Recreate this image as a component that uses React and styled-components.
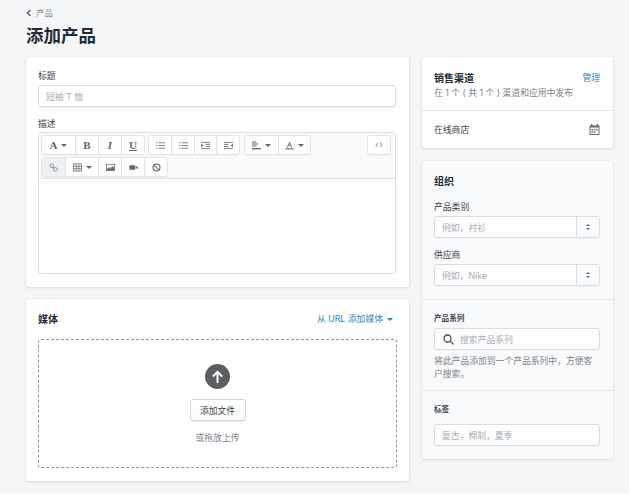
import React from "react";
import styled, { createGlobalStyle } from "styled-components";

const Global = createGlobalStyle`
  html, body { margin: 0; padding: 0; background: #fff; }
  body { font-family: "Inter", "Noto Sans CJK SC", "Noto Sans", sans-serif; color: #212b36; }
  * { box-sizing: border-box; }
`;
const Page = styled.div`
  width: 629px; height: 493px; overflow: hidden; background: #f4f6f8;
  padding: 7px 16px 0 26px;
`;
const Crumb = styled.div`
  display: flex; align-items: center; gap: 4px; height: 12px;
  font-size: 8.5px; color: #7b8792; line-height: 12px;
`;
const Title = styled.h1`
  margin: 5px 0 9px; font-size: 17.5px; line-height: 24px; height: 24px; font-weight: 700; color: #212b36;
`;
const Columns = styled.div`
  display: grid; grid-template-columns: 383px 191px; column-gap: 13px; align-items: start;
`;
const Stack = styled.div`
  display: flex; flex-direction: column; gap: ${p => p.$gap}px;
`;
const Card = styled.section`
  background: ${p => p.$muted ? "#f9fafb" : "#fff"}; border-radius: 3px;
  box-shadow: 0 0 0 1px rgba(63,63,68,.03), 0 1px 3px 0 rgba(63,63,68,.12);
  height: ${p => p.$h}px;
`;
const Section = styled.div`
  padding: ${p => p.$pad || "0 12px"};
  height: ${p => p.$h ? p.$h + "px" : "auto"};
  border-top: ${p => p.$line ? "1px solid #e6e9ec" : "none"};
`;
const Label = styled.div`
  font-size: ${p => p.$bold ? 7.6 : 8.8}px; line-height: 12px; height: 12px; color: #37424d;
  margin-bottom: ${p => p.$mb ?? 3}px; margin-top: ${p => p.$mt ?? 0}px;
  font-weight: ${p => p.$bold ? 600 : 400};
`;
const Input = styled.div`
  height: 22px; border: 1px solid #d8dde2; border-radius: 3px; background: #fff;
  box-shadow: 0 1px 1px rgba(22,29,37,.04);
  display: flex; align-items: center; padding: 0 7px;
  font-size: 8.8px; color: #a3adb6; white-space: nowrap;
`;
const Editor = styled.div`
  height: 142px; border: 1px solid #dadfe4; border-radius: 3px; background: #fff;
  display: flex; flex-direction: column;
`;
const Toolbar = styled.div`
  height: 46px; background: #f9fafb; border-bottom: 1px solid #dadfe4;
  padding: 2px 2px 0 2px; display: flex; flex-direction: column; gap: 2px;
`;
const ToolRow = styled.div`
  display: flex; gap: 3px; height: 20px;
`;
const Group = styled.div`
  display: flex; margin-left: ${p => p.$push ? "auto" : `${p.$ml || 0}px`}; margin-right: ${p => p.$push ? "2px" : "0"};
  border: 1px solid #e1e5e9; border-radius: 3px; background: #fff;
  box-shadow: 0 1px 1px rgba(22,29,37,.03);
`;
const Tool = styled.div`
  width: ${p => p.$w}px; display: flex; align-items: center; justify-content: center; gap: 4px;
  border-left: ${p => p.$first ? "none" : "1px solid #e1e5e9"};
  background: ${p => p.$on ? "#eef0f3" : "transparent"};
  color: #5c6873;
  font: ${p => p.$italic ? "italic " : ""}700 11px "Liberation Serif", serif;
  text-decoration: ${p => p.$under ? "underline" : "none"};
`;
const Caret = styled.span`
  display: inline-block; width: 0; height: 0;
  border-left: 3px solid transparent; border-right: 3px solid transparent;
  border-top: 3px solid ${p => p.$c || "#5c6873"};
`;
const Head = styled.div`
  display: flex; justify-content: space-between; align-items: center;
`;
const CardTitle = styled.div`
  font-size: 10px; line-height: 16px; font-weight: 600; color: #212b36;
  margin-bottom: ${p => p.$mb || 0}px;
`;
const LinkText = styled.div`
  display: flex; align-items: center; gap: 4px; font-size: 8.8px; line-height: 12px; color: #2f7fc1;
  margin-right: ${p => p.$mr || 0}px;
`;
const Sub = styled.div`
  font-size: 8.8px; line-height: 13px; color: #7a838c; margin-top: ${p => p.$mt || 0}px;
`;
const Row = styled.div`
  display: flex; justify-content: space-between; align-items: center; height: 100%;
  font-size: 8.8px; color: #37424d;
`;
const Drop = styled.div`
  height: 129px; border: 1px dashed #8f9396; border-radius: 3px; margin-top: 12px;
  display: flex; flex-direction: column; align-items: center; padding-top: 24px;
`;
const Circle = styled.div`
  width: 25px; height: 25px; border-radius: 50%; background: #5b5e61;
  display: flex; align-items: center; justify-content: center;
`;
const Button = styled.div`
  width: 56px; height: 22px; margin-top: 10px; border: 1px solid #d0d5da; border-radius: 3px;
  background: linear-gradient(#fff, #f9fafb); box-shadow: 0 1px 0 rgba(22,29,37,.05);
  display: flex; align-items: center; justify-content: center; font-size: 8.8px; color: #37424d;
`;
const Hint = styled.div`
  margin-top: 11px; font-size: 8.8px; line-height: 12px; color: #7a838c;
`;
const Combo = styled(Input)`
  padding: 0 0 0 7px; justify-content: space-between; margin-bottom: ${p => p.$mb || 0}px;
`;
const Stepper = styled.div`
  width: 23px; height: 20px; background: #f9fafb; border-left: 1px solid #dadfe4;
  border-radius: 0 3px 3px 0; display: flex; flex-direction: column; gap: 2px;
  align-items: center; justify-content: center;
`;
const Up = styled.span`
  width: 0; height: 0; border-left: 2px solid transparent; border-right: 2px solid transparent;
  border-bottom: 2.5px solid #5c6873;
`;
const Down = styled(Up)`
  border-bottom: none; border-top: 2.5px solid #5c6873;
`;
const Search = styled(Input)`
  gap: 6px; padding: 0 8px; color: #a3adb6;
`;

const G = ({ children }) => <svg width="9" height="9" viewBox="0 0 10 10" fill="#6b7681">{children}</svg>;
const Bullet = () => <G><rect x="0" y="1.5" width="1.5" height="1"/><rect x="0" y="4.5" width="1.5" height="1"/><rect x="0" y="7.5" width="1.5" height="1"/><rect x="3" y="1.5" width="7" height="1"/><rect x="3" y="4.5" width="7" height="1"/><rect x="3" y="7.5" width="7" height="1"/></G>;
const Indent = ({ flip }) => <G><rect x="0" y="1" width="10" height="1"/><rect x="0" y="8" width="10" height="1"/><rect x={flip ? 0 : 5} y="3.2" width="5" height="1"/><rect x={flip ? 0 : 5} y="5.7" width="5" height="1"/><path d={flip ? "M10 3v4L7 5z" : "M0 3v4l3-2z"}/></G>;
const Align = () => <G><rect x="0" y="0.5" width="5" height="1.2"/><rect x="0" y="2.7" width="7" height="1.2"/><rect x="0" y="4.9" width="5" height="1.2"/><rect x="0" y="7.8" width="10" height="1.6"/></G>;
const Color = () => <G><path d="M5 0.5 8 7H6.7L6 5.3H4L3.3 7H2zM4.4 4.3h1.2L5 2.7z"/><rect x="0.5" y="8" width="9" height="1.4"/></G>;
const Code = () => <svg width="8" height="6" viewBox="0 0 10 7" fill="none" stroke="#77828c" strokeWidth="1.1"><path d="M3.5 1 1 3.5 3.5 6M6.5 1 9 3.5 6.5 6"/></svg>;
const LinkIcon = () => <svg width="9" height="9" viewBox="0 0 10 10" fill="none" stroke="#8a949d" strokeWidth="1.1"><circle cx="3" cy="3" r="2"/><circle cx="7" cy="7" r="2"/><path d="M4 4l2 2"/></svg>;
const TableIcon = () => <svg width="9" height="9" viewBox="0 0 10 10" fill="none" stroke="#6b7681" strokeWidth="0.9"><rect x="0.5" y="1" width="9" height="8"/><path d="M0.5 3.7h9M0.5 6.3h9M3.5 1v8M6.5 1v8"/></svg>;
const ImageIcon = () => <svg width="9" height="9" viewBox="0 0 10 10" fill="#6b7681"><path d="M0 1h10v8H0zm1 1v5l2.5-2.5L5 6l2-3 2 2.5V2z" fillRule="evenodd"/></svg>;
const VideoIcon = () => <svg width="9" height="9" viewBox="0 0 10 10" fill="#5c6873"><rect x="0.5" y="2.5" width="6.5" height="5" rx="0.6"/><path d="M7 5l2.7-2v4z"/></svg>;
const BlockIcon = () => <svg width="9" height="9" viewBox="0 0 10 10" fill="none" stroke="#5c6873" strokeWidth="1.2"><circle cx="5" cy="5" r="3.9"/><path d="M2.3 2.3l5.4 5.4"/></svg>;
const Calendar = () => <svg width="11" height="11" viewBox="0 0 11 11"><path d="M0.5 1.5h10v9.5h-10z" fill="#5f6b76"/><rect x="2" y="0" width="1.5" height="2" fill="#5f6b76"/><rect x="7.5" y="0" width="1.5" height="2" fill="#5f6b76"/><rect x="1.5" y="3.5" width="8" height="6.5" fill="#fff"/><rect x="2.5" y="5" width="1.5" height="1.5" fill="#5f6b76"/><rect x="4.8" y="5" width="1.5" height="1.5" fill="#5f6b76"/><rect x="7" y="5" width="1.5" height="1.5" fill="#5f6b76"/><rect x="2.5" y="7.3" width="1.5" height="1.5" fill="#5f6b76"/><rect x="4.8" y="7.3" width="1.5" height="1.5" fill="#5f6b76"/></svg>;

export default function App() {
  return (
    <>
      <Global />
      <Page>
        <Crumb>
          <svg width="6" height="8" viewBox="0 0 6 8" fill="none" stroke="#454f5b" strokeWidth="1.2"><path d="M4.5 1 1.5 4l3 3"/></svg>
          产品
        </Crumb>
        <Title>添加产品</Title>
        <Columns>
          <Stack $gap={12}>
            <Card $h={230}>
              <Section $pad="13px 13px 0 12px">
                <Label>标题</Label>
                <Input>短袖 T 恤</Input>
                <Label $mt={11} $mb={2}>描述</Label>
                <Editor>
                  <Toolbar>
                    <ToolRow>
                      <Group>
                        <Tool $first $w={33}>A<Caret /></Tool>
                        <Tool $w={23}>B</Tool>
                        <Tool $w={23} $italic>I</Tool>
                        <Tool $w={23} $under>U</Tool>
                      </Group>
                      <Group>
                        <Tool $first $w={22}><Bullet /></Tool>
                        <Tool $w={23}><Bullet /></Tool>
                        <Tool $w={22}><Indent /></Tool>
                        <Tool $w={23}><Indent flip /></Tool>
                      </Group>
                      <Group $ml={1}>
                        <Tool $first $w={33}><Align /><Caret /></Tool>
                        <Tool $w={32}><Color /><Caret /></Tool>
                      </Group>
                      <Group $push>
                        <Tool $first $w={22}><Code /></Tool>
                      </Group>
                    </ToolRow>
                    <ToolRow>
                      <Group>
                        <Tool $first $on $w={23}><LinkIcon /></Tool>
                        <Tool $w={33}><TableIcon /><Caret /></Tool>
                        <Tool $w={23}><ImageIcon /></Tool>
                        <Tool $w={23}><VideoIcon /></Tool>
                        <Tool $w={23}><BlockIcon /></Tool>
                      </Group>
                    </ToolRow>
                  </Toolbar>
                </Editor>
              </Section>
            </Card>
            <Card $h={182}>
              <Section $pad="12px 12px 0 12px">
                <Head>
                  <CardTitle>媒体</CardTitle>
                  <LinkText $mr={4}>从 URL 添加媒体<Caret $c="#2f7fc1" /></LinkText>
                </Head>
                <Drop>
                  <Circle>
                    <svg width="13" height="14" viewBox="0 0 13 14" fill="none" stroke="#fff" strokeWidth="2"><path d="M6.5 13V2M1.8 6.5 6.5 1.8l4.7 4.7"/></svg>
                  </Circle>
                  <Button>添加文件</Button>
                  <Hint>或拖放上传</Hint>
                </Drop>
              </Section>
            </Card>
          </Stack>
          <Stack $gap={13}>
            <Card $h={91}>
              <Section $pad="13px 13px 0 12px" $h={53}>
                <Head>
                  <CardTitle>销售渠道</CardTitle>
                  <LinkText>管理</LinkText>
                </Head>
                <Sub>在 1 个 ( 共 1 个 ) 渠道和应用中发布</Sub>
              </Section>
              <Section $line $h={38} $pad="0 13px 0 12px">
                <Row>在线商店<Calendar /></Row>
              </Section>
            </Card>
            <Card $muted $h={298}>
              <Section $pad="12px 13px 0 12px" $h={138}>
                <CardTitle $mb={12}>组织</CardTitle>
                <Label>产品类别</Label>
                <Combo $mb={11}>例如，衬衫<Stepper><Up /><Down /></Stepper></Combo>
                <Label>供应商</Label>
                <Combo>例如，Nike<Stepper><Up /><Down /></Stepper></Combo>
              </Section>
              <Section $line $pad="13px 13px 0 12px" $h={91}>
                <Label $bold>产品系列</Label>
                <Search>
                  <svg width="11" height="11" viewBox="0 0 11 11" fill="none" stroke="#454f5b" strokeWidth="1.3"><circle cx="4.5" cy="4.5" r="3.5"/><path d="M7 7l3.5 3.5"/></svg>
                  搜索产品系列
                </Search>
                <Sub $mt={4}>将此产品添加到一个产品系列中，方便客户搜索。</Sub>
              </Section>
              <Section $line $pad="13px 13px 0 12px">
                <Label $bold $mb={8}>标签</Label>
                <Input>复古，棉制，夏季</Input>
              </Section>
            </Card>
          </Stack>
        </Columns>
      </Page>
    </>
  );
}
